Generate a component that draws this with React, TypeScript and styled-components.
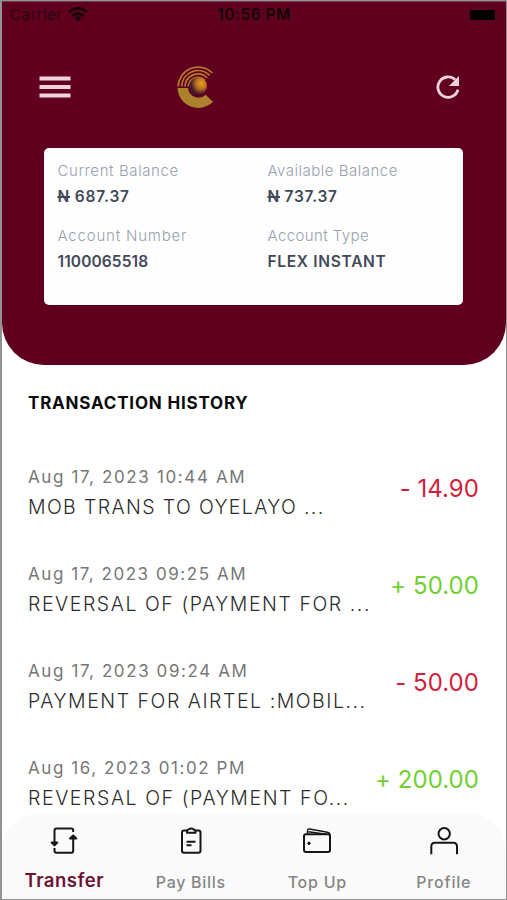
import React from "react";
import styled, { createGlobalStyle } from "styled-components";

const GlobalStyle = createGlobalStyle`
  * { box-sizing: border-box; }
  body { margin: 0; background: #fff; }
`;

const Screen = styled.main`
  width: 507px;
  height: 900px;
  display: flex;
  flex-direction: column;
  overflow: hidden;
  border: 1px solid #929292;
  border-left: 2px solid #929292;
  background: #fff;
  font-family: Inter, "Open Sans", sans-serif;
`;

const Hero = styled.header`
  flex: none;
  height: 364px;
  border-radius: 0 0 42px 42px;
  background: #61001e;
  border-top: 1px solid #74404f;
`;

const StatusBar = styled.div`
  display: grid;
  grid-template-columns: 1fr auto 1fr;
  align-items: center;
  height: 25px;
  padding: 0 8px 0 8px;
  color: #2a0410;
`;

const Carrier = styled.div`
  display: flex;
  align-items: center;
  gap: 5px;
  font-size: 15px;
  letter-spacing: 0.5px;
`;

const Clock = styled.div`
  font-size: 15.5px;
  font-weight: 600;
  letter-spacing: 0.5px;
  color: #120309;
`;

const Battery = styled.div`
  justify-self: end;
  width: 31px;
  height: 16px;
  padding: 2px;
  border: 1px solid #500a20;
  border-radius: 4px;
  &::before {
    content: "";
    display: block;
    height: 100%;
    border-radius: 2px;
    background: #000;
  }
`;

const TopNav = styled.nav`
  display: flex;
  align-items: center;
  height: 120px;
  padding: 0 46px 0 37px;
`;

const IconButton = styled.button`
  display: flex;
  padding: 0;
  border: 0;
  background: none;
  color: #eed3df;
`;

const Logo = styled.div`
  display: flex;
  margin: 0 auto 0 106px;
`;

const BalanceCard = styled.section`
  display: grid;
  grid-template-columns: 210px 1fr;
  grid-auto-rows: 65px;
  width: 419px;
  height: 157px;
  margin: 1px 0 0 42px;
  padding: 12px 0 0 13.5px;
  border-radius: 5px;
  background: #fefefe;
`;

const Field = styled.div`
  display: flex;
  flex-direction: column;
`;

const FieldLabel = styled.span<{ $track: number }>`
  font-size: 15px;
  line-height: 22px;
  font-weight: 350;
  color: #989fb0;
  white-space: nowrap;
  letter-spacing: ${(p) => p.$track}px;
`;

const FieldValue = styled.span<{ $track: number }>`
  margin-top: 3px;
  font-size: 15.5px;
  line-height: 24px;
  font-weight: 600;
  color: #424959;
  white-space: nowrap;
  letter-spacing: ${(p) => p.$track}px;
`;

const Naira = styled.s`
  text-decoration-thickness: 1.5px;
`;

const History = styled.section`
  flex: 1;
  min-height: 0;
  overflow: hidden;
  padding: 26px 27px 0 26px;
`;

const Heading = styled.h2`
  margin: 0 0 47px;
  font-size: 17px;
  line-height: 24px;
  font-weight: 700;
  letter-spacing: 0.8px;
  color: #0a0a0a;
`;

const Transaction = styled.article`
  display: flex;
  justify-content: space-between;
  height: 97px;
`;

const When = styled.div<{ $track: number }>`
  font-size: 17px;
  line-height: 30px;
  color: #777;
  white-space: nowrap;
  letter-spacing: ${(p) => p.$track}px;
`;

const Title = styled.div<{ $track: number }>`
  font-size: 19.5px;
  line-height: 30px;
  font-weight: 350;
  color: #2c2c2c;
  white-space: nowrap;
  letter-spacing: ${(p) => p.$track}px;
`;

const Amount = styled.div<{ $credit: boolean }>`
  margin-top: 12px;
  font-size: 24px;
  line-height: 30px;
  font-weight: 370;
  letter-spacing: 0.05px;
  white-space: nowrap;
  color: ${(p) => (p.$credit ? "#72cf32" : "#d21f3c")};
`;

const TabBar = styled.nav`
  flex: none;
  display: grid;
  grid-template-columns: repeat(4, 126.5px);
  height: 86px;
  margin-left: -1px;
  border-radius: 40px 40px 0 0;
  background: #fafafa;
`;

const Tab = styled.button<{ $active?: boolean; $track: number }>`
  display: flex;
  flex-direction: column;
  align-items: center;
  padding: 13px 0 0;
  border: 0;
  background: none;
  font-family: inherit;
  font-size: ${(p) => (p.$active ? 18.5 : 16)}px;
  font-weight: ${(p) => (p.$active ? 600 : 500)};
  line-height: 24px;
  letter-spacing: ${(p) => p.$track}px;
  color: ${(p) => (p.$active ? "#6c1233" : "#858585")};
  white-space: nowrap;
`;

const TabIcon = styled.svg`
  flex: none;
  width: 32px;
  height: 32px;
  margin-bottom: 12px;
  fill: none;
  stroke: #161616;
  stroke-width: 2;
  stroke-linejoin: round;
`;

const TabLabel = styled.span<{ $active?: boolean }>`
  margin-top: ${(p) => (p.$active ? -2 : 0)}px;
`;

const fields = [
  { label: "Current Balance", lt: 0.6, value: "687.37", vt: 0.8, naira: true },
  { label: "Available Balance", lt: 0.5, value: "737.37", vt: 0.7, naira: true },
  { label: "Account Number", lt: 0.8, value: "1100065518", vt: 0.1, naira: false },
  { label: "Account Type", lt: 0.4, value: "FLEX INSTANT", vt: 0.7, naira: false },
];

const transactions = [
  { when: "Aug 17, 2023 10:44 AM", wt: 1.62, title: "MOB TRANS TO OYELAYO ...", tt: 1.37, amount: "- 14.90" },
  { when: "Aug 17, 2023 09:25 AM", wt: 1.55, title: "REVERSAL OF (PAYMENT FOR ...", tt: 1.55, amount: "+ 50.00" },
  { when: "Aug 17, 2023 09:24 AM", wt: 1.6, title: "PAYMENT FOR AIRTEL :MOBIL...", tt: 1.53, amount: "- 50.00" },
  { when: "Aug 16, 2023 01:02 PM", wt: 1.57, title: "REVERSAL OF (PAYMENT FO...", tt: 1.58, amount: "+ 200.00" },
];

const WifiIcon = () => (
  <svg width="20" height="15" viewBox="0 0 20 15" fill="none" stroke="#14040a" strokeWidth="2.7">
    <path d="M1 5.2Q10-2.4 19 5.2" />
    <path d="M4.2 9Q10 4 15.8 9" />
    <path d="M10 14.4 6.4 10.8Q10 8 13.6 10.8Z" fill="#14040a" stroke="none" />
  </svg>
);

const MenuIcon = () => (
  <svg width="32" height="22" viewBox="0 0 32 22" fill="currentColor">
    <path d="M0.5.5h31v4h-31zM.5 9h31v4h-31zM.5 17.4h31v4h-31z" />
  </svg>
);

const RefreshIcon = () => (
  <svg width="24" height="24" viewBox="0 0 24 24">
    <path d="M19.2 4.8A10.2 10.2 0 1 0 22 14.7" fill="none" stroke="currentColor" strokeWidth="2.8" />
    <path d="M23 1v10H13z" fill="currentColor" />
  </svg>
);

const BrandMark = () => (
  <svg width="38" height="44" viewBox="0 0 38 44">
    <defs>
      <radialGradient id="orb" cx="0.68" cy="0.36" r="0.72">
        <stop offset="0" stopColor="#e89a20" />
        <stop offset="0.4" stopColor="#bf7520" />
        <stop offset="0.8" stopColor="#4b2028" />
        <stop offset="1" stopColor="#35172c" />
      </radialGradient>
    </defs>
    <g fill="none" stroke="#b47a30" strokeWidth="1.7">
      <path d="M1.2 21.5A20 20 0 0 1 35.3 7.9" />
      <path d="M4.6 21.5A16.5 16.5 0 0 1 32.7 10.3" />
      <path d="M8 21.5A13 13 0 0 1 30.2 12.8" />
      <path d="M11.4 21.5A9.6 9.6 0 0 1 27.8 15.2" />
    </g>
    <path d="M.5 23H11A10.5 10.5 0 0 0 28.6 29.8L36 36.8A20.8 20.8 0 0 1 .5 23Z" fill="#ab812c" />
    <circle cx="21.2" cy="21" r="8.8" fill="url(#orb)" />
  </svg>
);

const TransferIcon = () => (
  <TabIcon viewBox="0 0 32 32">
    <path d="M25.2 6V4.5Q25.2 2.5 23.2 2.5H8.5Q6.5 2.5 6.5 4.5V16M6.5 22V24.8Q6.5 26.8 8.5 26.8H23.2Q25.2 26.8 25.2 24.8V12" />
    <path d="M3.7 16.5H9.3L6.5 19.4ZM22 12.5H28.3L25.2 9.5Z" fill="#161616" />
  </TabIcon>
);

const BillsIcon = () => (
  <TabIcon viewBox="0 0 32 32">
    <path d="M12 4.5H9Q7 4.5 7 6.5V24.7Q7 26.7 9 26.7H23.5Q25.5 26.7 25.5 24.7V6.5Q25.5 4.5 23.5 4.5H20.5" />
    <path d="M12 6.8V4.5Q12 3.8 13.5 3.7Q14 2.5 16.2 2.5T19 3.7Q20.5 3.8 20.5 4.5V6.8Z" />
    <path d="M11.5 15.7H20.5M11.5 19.2H16.5" />
  </TabIcon>
);

const WalletIcon = () => (
  <TabIcon viewBox="0 0 32 32">
    <rect x="3" y="8.3" width="26" height="17.7" rx="2" />
    <path d="M6.5 8V4.5Q6.7 2.7 8.7 2.9L26.5 6.3Q29 6.7 29 9.5M7.5 5.7 25 8.3" strokeWidth="1.5" />
    <circle cx="8" cy="17.3" r="1.2" fill="#161616" strokeWidth="1" />
  </TabIcon>
);

const ProfileIcon = () => (
  <TabIcon viewBox="0 0 32 32">
    <circle cx="16.2" cy="7.7" r="5.7" />
    <path d="M3.3 28.3V20.5Q3.3 16.7 7.1 16.7H25.2Q29 16.7 29 20.5V28.3" />
  </TabIcon>
);

export default function App() {
  return (
    <>
      <GlobalStyle />
      <Screen>
        <Hero>
          <StatusBar>
            <Carrier>Carrier <WifiIcon /></Carrier>
            <Clock>10:56 PM</Clock>
            <Battery />
          </StatusBar>
          <TopNav>
            <IconButton aria-label="Menu"><MenuIcon /></IconButton>
            <Logo><BrandMark /></Logo>
            <IconButton aria-label="Refresh"><RefreshIcon /></IconButton>
          </TopNav>
          <BalanceCard>
            {fields.map((f) => (
              <Field key={f.label}>
                <FieldLabel $track={f.lt}>{f.label}</FieldLabel>
                <FieldValue $track={f.vt}>{f.naira && <><Naira>N</Naira>{" "}</>}{f.value}</FieldValue>
              </Field>
            ))}
          </BalanceCard>
        </Hero>
        <History>
          <Heading>TRANSACTION HISTORY</Heading>
          {transactions.map((t) => (
            <Transaction key={t.when}>
              <div>
                <When $track={t.wt}>{t.when}</When>
                <Title $track={t.tt}>{t.title}</Title>
              </div>
              <Amount $credit={t.amount.startsWith("+")}>{t.amount}</Amount>
            </Transaction>
          ))}
        </History>
        <TabBar>
          <Tab $active $track={0.5}><TransferIcon /><TabLabel $active>Transfer</TabLabel></Tab>
          <Tab $track={0.7}><BillsIcon /><TabLabel>Pay Bills</TabLabel></Tab>
          <Tab $track={0.75}><WalletIcon /><TabLabel>Top Up</TabLabel></Tab>
          <Tab $track={0.8}><ProfileIcon /><TabLabel>Profile</TabLabel></Tab>
        </TabBar>
      </Screen>
    </>
  );
}
